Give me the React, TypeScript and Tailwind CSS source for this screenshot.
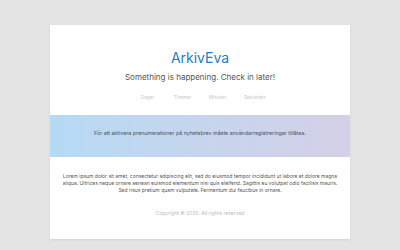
import React from 'react';

const App = () => {
  const units = ['Dagar', 'Timmar', 'Minuter', 'Sekunder'];

  return (
    <div className="w-[400px] h-[250px] bg-[#e4e4e4] pt-[25px] overflow-hidden" style={{ fontFamily: 'Inter, "Open Sans", sans-serif' }}>
      <div className="mx-auto w-[300px] bg-white shadow-[0_1px_2px_rgba(0,0,0,0.08)]">
        {/* Header */}
        <header className="pt-[23px] h-[90px] text-center">
          <h1 className="text-[14px] leading-[20px] text-[#1d7ec6]">ArkivEva</h1>
          <p className="mt-[4px] text-[8px] leading-[10px] text-[#555]">Something is happening. Check in later!</p>
          <div className="mt-[12px] flex justify-center gap-[18px] text-[4.8px] leading-[6px] text-[#c8c8c8]">
            {units.map((u) => (
              <span key={u} className="w-[17px] text-center">{u}</span>
            ))}
          </div>
        </header>

        {/* Newsletter notice */}
        <section className="h-[42px] flex items-start justify-center pt-[15px] bg-gradient-to-r from-[#b6daf4] to-[#d4d0e7]">
          <p className="text-[5.3px] leading-[7px] text-[#4b5263]">
            För att aktivera prenumerationer på nyhetsbrev måste användarregistreringar tillåtas.
          </p>
        </section>

        {/* Body */}
        <section className="pt-[16px] pb-[22px] px-[12px] text-center">
          <p className="text-[5px] leading-[7px] text-[#555]">
            Lorem ipsum dolor sit amet, consectetur adipiscing elit, sed do eiusmod tempor incididunt ut labore et dolore magna aliqua. Ultrices neque ornare aenean euismod elementum nisi quis eleifend. Sagittis eu volutpat odio facilisis mauris. Sed risus pretium quam vulputate. Fermentum dui faucibus in ornare.
          </p>
          <p className="mt-[16px] text-[5px] leading-[7px] text-[#bdbdbd]">Copyright © 2020. All rights reserved</p>
        </section>
      </div>
    </div>
  );
};

export default App;
